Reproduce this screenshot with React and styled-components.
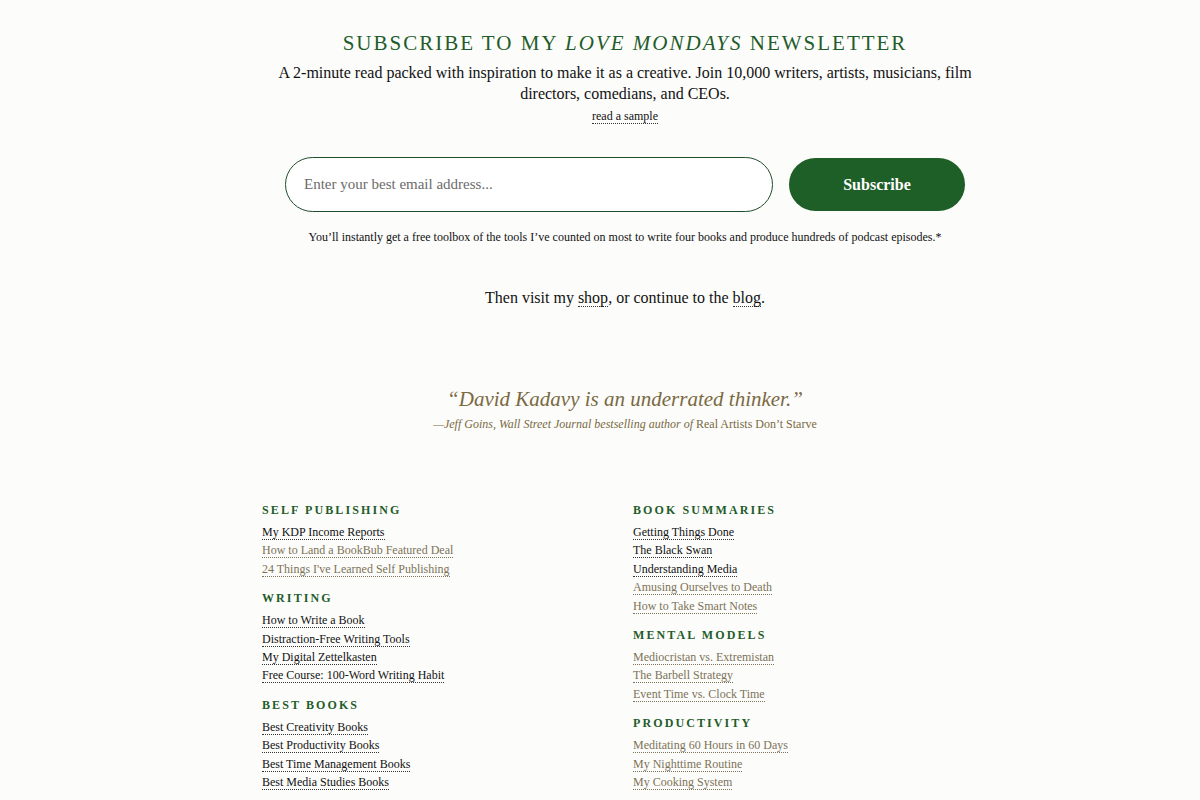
import React from "react";
import styled, { createGlobalStyle } from "styled-components";

const GlobalStyle = createGlobalStyle`
  html, body {
    margin: 0;
    padding: 0;
    background: #fcfcfb;
  }
  body {
    font-family: "Liberation Serif", "Times New Roman", serif;
    color: #111;
  }
`;

const Page = styled.div`
  width: 1200px;
  padding: 30px 0 0 50px;
  box-sizing: border-box;
  display: flex;
  flex-direction: column;
  align-items: center;
`;

const Signup = styled.section`
  display: flex;
  flex-direction: column;
  align-items: center;
  text-align: center;
`;

const Heading = styled.h2`
  margin: 0;
  font-size: 21px;
  font-weight: 400;
  letter-spacing: 2px;
  text-transform: uppercase;
  color: #1f5c2a;
  line-height: 26px;

  em {
    font-style: italic;
  }
`;

const Lead = styled.p`
  margin: 6px 0 0;
  width: 700px;
  font-size: 16px;
  line-height: 21px;
`;

const DotLink = styled.a`
  color: ${({ $muted }) => ($muted ? "#7d7357" : "#111")};
  text-decoration: none;
  border-bottom: 1px dotted ${({ $muted }) => ($muted ? "#7d7357" : "#333")};
  cursor: pointer;
`;

const SampleLink = styled(DotLink)`
  display: inline-block;
  margin-top: 5px;
  font-size: 12px;
  line-height: 14px;
`;

const Form = styled.form`
  display: flex;
  gap: 16px;
  margin-top: 33px;
  align-items: center;
`;

const EmailInput = styled.input`
  width: 488px;
  height: 55px;
  box-sizing: border-box;
  padding: 0 18px;
  border: 1px solid #1f4d2a;
  border-radius: 28px;
  background: #fff;
  font-family: "Liberation Serif", serif;
  font-size: 15px;
  color: #111;
  outline: none;

  &::placeholder {
    color: #6b6b6b;
  }
`;

const SubscribeButton = styled.button`
  width: 176px;
  height: 53px;
  border: none;
  border-radius: 27px;
  background: #1e5e27;
  color: #fff;
  font-family: "Liberation Serif", serif;
  font-weight: 700;
  font-size: 16px;
  cursor: pointer;
`;

const Fine = styled.p`
  margin: 17px 0 0;
  font-size: 12px;
  line-height: 16px;
`;

const Onward = styled.p`
  margin: 43px 0 0;
  font-size: 16px;
  line-height: 20px;
`;

const Blurb = styled.figure`
  margin: 78px 0 0;
  text-align: center;
  color: #7a6a42;
`;

const Quote = styled.blockquote`
  margin: 0;
  font-size: 21px;
  font-style: italic;
  line-height: 26px;
`;

const Credit = styled.figcaption`
  margin-top: 4px;
  font-size: 12px;
  line-height: 16px;

  em {
    font-style: italic;
  }
`;

const Directory = styled.nav`
  display: grid;
  grid-template-columns: 371px 355px;
  margin-top: 70px;
  width: 726px;
`;

const Column = styled.div`
  display: flex;
  flex-direction: column;
  gap: 12px;
`;

const Group = styled.div`
  display: flex;
  flex-direction: column;
`;

const GroupTitle = styled.h3`
  margin: 0 0 5px;
  font-size: 12px;
  font-weight: 700;
  letter-spacing: 2.1px;
  text-transform: uppercase;
  color: #1f5c2a;
  line-height: 16px;
`;

const LinkList = styled.ul`
  list-style: none;
  margin: 0;
  padding: 0;
  display: flex;
  flex-direction: column;
  align-items: flex-start;
`;

const Item = styled.li`
  font-size: 12px;
  line-height: 18.4px;
`;

const groups = {
  left: [
    {
      title: "Self Publishing",
      links: [
        ["My KDP Income Reports", false],
        ["How to Land a BookBub Featured Deal", true],
        ["24 Things I've Learned Self Publishing", true],
      ],
    },
    {
      title: "Writing",
      links: [
        ["How to Write a Book", false],
        ["Distraction-Free Writing Tools", false],
        ["My Digital Zettelkasten", false],
        ["Free Course: 100-Word Writing Habit", false],
      ],
    },
    {
      title: "Best Books",
      links: [
        ["Best Creativity Books", false],
        ["Best Productivity Books", false],
        ["Best Time Management Books", false],
        ["Best Media Studies Books", false],
      ],
    },
  ],
  right: [
    {
      title: "Book Summaries",
      links: [
        ["Getting Things Done", false],
        ["The Black Swan", false],
        ["Understanding Media", false],
        ["Amusing Ourselves to Death", true],
        ["How to Take Smart Notes", true],
      ],
    },
    {
      title: "Mental Models",
      links: [
        ["Mediocristan vs. Extremistan", true],
        ["The Barbell Strategy", true],
        ["Event Time vs. Clock Time", true],
      ],
    },
    {
      title: "Productivity",
      links: [
        ["Meditating 60 Hours in 60 Days", true],
        ["My Nighttime Routine", true],
        ["My Cooking System", true],
      ],
    },
  ],
};

const LinkGroup = ({ title, links }) => (
  <Group>
    <GroupTitle>{title}</GroupTitle>
    <LinkList>
      {links.map(([label, visited]) => (
        <Item key={label}>
          <DotLink $muted={visited}>{label}</DotLink>
        </Item>
      ))}
    </LinkList>
  </Group>
);

export default function App() {
  return (
    <>
      <GlobalStyle />
      <Page>
        <Signup>
          <Heading>
            Subscribe to my <em>Love Mondays</em> newsletter
          </Heading>
          <Lead>
            A 2-minute read packed with inspiration to make it as a creative.
            Join 10,000 writers, artists, musicians, film directors, comedians,
            and CEOs.
          </Lead>
          <SampleLink>read a sample</SampleLink>
          <Form onSubmit={(e) => e.preventDefault()}>
            <EmailInput type="email" placeholder="Enter your best email address..." />
            <SubscribeButton type="submit">Subscribe</SubscribeButton>
          </Form>
          <Fine>
            You’ll instantly get a free toolbox of the tools I’ve counted on most
            to write four books and produce hundreds of podcast episodes.*
          </Fine>
          <Onward>
            Then visit my <DotLink>shop</DotLink>, or continue to the{" "}
            <DotLink>blog</DotLink>.
          </Onward>
        </Signup>

        <Blurb>
          <Quote>“David Kadavy is an underrated thinker.”</Quote>
          <Credit>
            <em>—Jeff Goins, Wall Street Journal bestselling author of </em>
            Real Artists Don’t Starve
          </Credit>
        </Blurb>

        <Directory>
          <Column>
            {groups.left.map((g) => (
              <LinkGroup key={g.title} {...g} />
            ))}
          </Column>
          <Column>
            {groups.right.map((g) => (
              <LinkGroup key={g.title} {...g} />
            ))}
          </Column>
        </Directory>
      </Page>
    </>
  );
}
